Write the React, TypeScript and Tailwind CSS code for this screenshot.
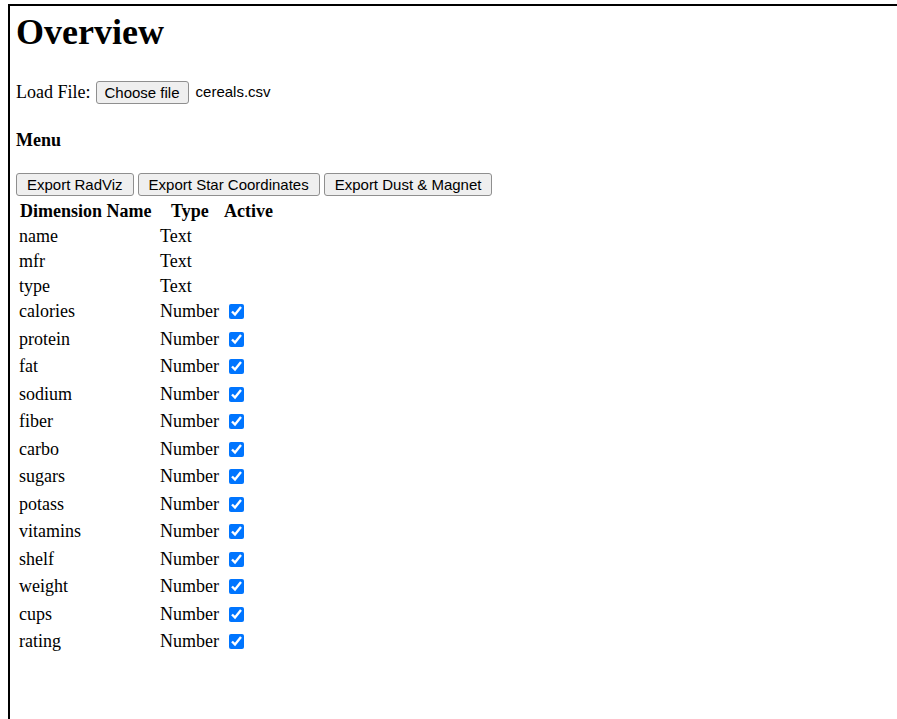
import React from "react";

type Dimension = { name: string; type: "Text" | "Number" };

const dimensions: Dimension[] = [
  { name: "name", type: "Text" },
  { name: "mfr", type: "Text" },
  { name: "type", type: "Text" },
  { name: "calories", type: "Number" },
  { name: "protein", type: "Number" },
  { name: "fat", type: "Number" },
  { name: "sodium", type: "Number" },
  { name: "fiber", type: "Number" },
  { name: "carbo", type: "Number" },
  { name: "sugars", type: "Number" },
  { name: "potass", type: "Number" },
  { name: "vitamins", type: "Number" },
  { name: "shelf", type: "Number" },
  { name: "weight", type: "Number" },
  { name: "cups", type: "Number" },
  { name: "rating", type: "Number" },
];

const btn =
  "h-[23px] px-[10px] bg-[#efefef] border border-[#8f8f8f] rounded-[3px] text-[15px] leading-none text-black font-['Liberation_Sans',Arial,sans-serif] whitespace-nowrap";

const App = () => {
  return (
    <div className="pt-[4px] pl-[8px] font-['Liberation_Serif','Times_New_Roman',serif] text-black bg-white min-h-[719px]">
      <div className="border-t-2 border-l-2 border-black min-h-[715px] pl-[6px]">
        <h1 className="mt-[6px] text-[36px] leading-[41px] font-bold">Overview</h1>

        <div className="mt-[27px] h-[24px] flex items-center text-[18px]">
          <span>Load File:</span>
          <label className="ml-[5px] flex items-center">
            <span className={`${btn} !px-[8px] flex items-center`}>Choose file</span>
            <span className="ml-[7px] text-[15px] font-['Liberation_Sans',Arial,sans-serif]">cereals.csv</span>
          </label>
        </div>

        <h4 className="mt-[26px] text-[18px] leading-[21px] font-bold">Menu</h4>

        <div className="mt-[22px] flex gap-[4px]">
          <button className={btn}>Export RadViz</button>
          <button className={btn}>Export Star Coordinates</button>
          <button className={btn}>Export Dust &amp; Magnet</button>
        </div>

        <div className="mt-[3px] h-[25px] pl-[4px] flex items-center text-[18px] font-bold">
          <span className="w-[151px]">Dimension Name</span>
          <span className="w-[53px]">Type</span>
          <span>Active</span>
        </div>

        {dimensions.map((d) => (
          <div
            key={d.name}
            className={`pl-[3px] flex items-start text-[18px] ${d.type === "Number" ? "h-[27.5px]" : "h-[25px]"}`}
          >
            <div className="h-[25px] flex items-center w-[141px]">{d.name}</div>
            <div className="h-[25px] flex items-center gap-[10px]">
              <span>{d.type}</span>
              {d.type === "Number" && (
                <input type="checkbox" defaultChecked className="m-0 h-[15px] w-[15px] accent-[#0075ff]" />
              )}
            </div>
          </div>
        ))}
      </div>
    </div>
  );
};

export default App;
